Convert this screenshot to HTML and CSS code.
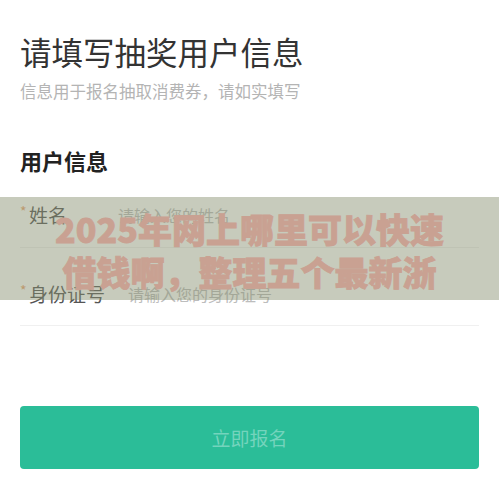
FILE: index.html
```
<!DOCTYPE html>
<html lang="zh-CN">
<head>
    <meta charset="UTF-8">
    <meta name="viewport" content="width=device-width, initial-scale=1.0">
    <title>请填写抽奖用户信息</title>
    <link rel="stylesheet" href="styles.css">
</head>
<body>

<div id="page">
    <h1 class="title">请填写抽奖用户信息</h1>
    <p class="subtitle">信息用于报名抽取消费券，请如实填写</p>

    <h2 class="section-title">用户信息</h2>
    <div class="form">
        <div class="field">
            <label class="field-label"><span class="required">*</span>姓名</label>
            <input class="field-input" type="text" placeholder="请输入您的姓名">
        </div>
        <div class="field field-long">
            <label class="field-label"><span class="required">*</span>身份证号</label>
            <input class="field-input" type="text" placeholder="请输入您的身份证号">
        </div>
    </div>

    <button class="submit">立即报名</button>
</div>

<div class="banner">
    <div class="banner-line">2025年网上哪里可以快速</div>
    <div class="banner-line">借钱啊，整理五个最新浙</div>
</div>

</body>
</html>
```

FILE: styles.css
```
body {
    margin: 0;
    padding: 0 20px;
    background: #fff;
    font-family: "Noto Sans CJK SC", "Noto Sans", sans-serif;
    color: #333;
    position: relative;
}

.title {
    margin: 31px 0 0;
    font-size: 31.5px;
    line-height: 40px;
    font-weight: 400;
    color: #333;
}

.subtitle {
    margin: 10px 0 0;
    font-size: 16.5px;
    line-height: 20px;
    color: #b4b4b4;
}

.section-title {
    margin: 48px 0 0;
    font-size: 22px;
    line-height: 22px;
    font-weight: 700;
    color: #222;
}

.field {
    display: flex;
    align-items: center;
    padding: 33px 0 21px;
    border-bottom: 1px solid #f0f0f0;
}

.field:last-child {
    padding-top: 35px;
    padding-bottom: 20px;
}

.field-label {
    width: 98px;
    flex-shrink: 0;
    font-size: 19px;
    line-height: 22px;
    color: #555;
}

.field-long .field-label {
    width: 108px;
}

.required {
    display: inline-block;
    width: 9px;
    font-size: 14px;
    line-height: 14px;
    vertical-align: top;
    color: #eaa36f;
}

.field-input {
    flex: 1;
    border: none;
    outline: none;
    padding: 0;
    font-family: inherit;
    font-size: 16px;
    line-height: 22px;
    color: #333;
    background: transparent;
}

.field-input::placeholder {
    color: #bdbdbd;
}

.submit {
    display: block;
    width: 100%;
    height: 63px;
    margin-top: 80px;
    border: none;
    border-radius: 4px;
    background: #2bbd98;
    color: #74d4bd;
    font-family: inherit;
    font-size: 19px;
}

/* overlay banner */
.banner {
    position: absolute;
    top: 197px;
    left: 0;
    width: 100%;
    height: 103px;
    box-sizing: border-box;
    padding-top: 10px;
    background: rgba(133, 141, 109, 0.46);
    text-align: center;
    overflow: hidden;
}

.banner-line {
    font-size: 34px;
    line-height: 43px;
    font-weight: 900;
    color: #c9a192;
    -webkit-text-stroke: 0.8px #c9a192;
    white-space: nowrap;
}
```
